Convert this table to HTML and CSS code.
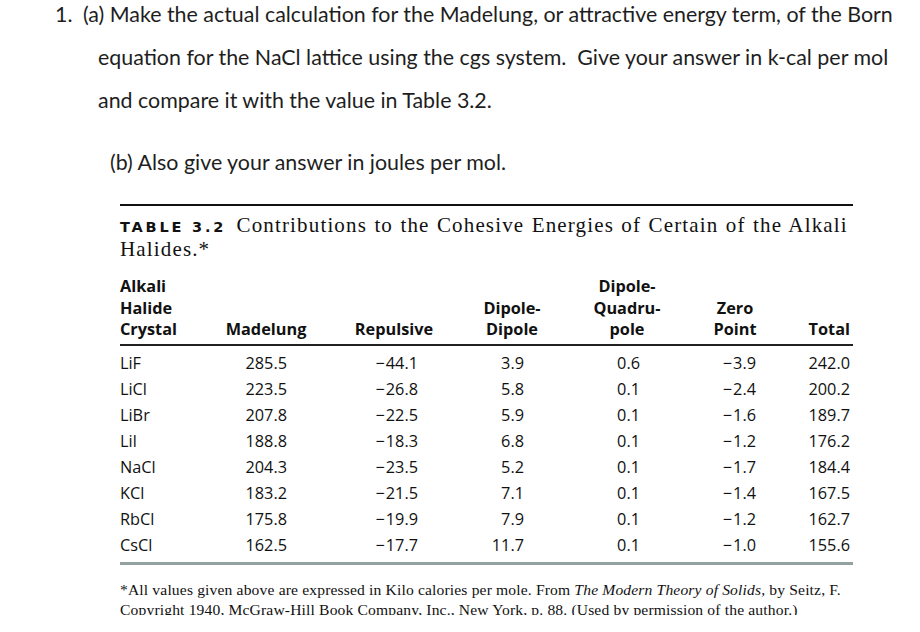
FILE: index.html
```html
<!DOCTYPE html>
<html>
<head>
<meta charset="utf-8">
<link rel="stylesheet" href="styles.css">
</head>
<body>
<div class="page">
  <div class="question">
    <div class="num">1.</div>
    <div class="qbody">(a) Make the actual calculation for the Madelung, or attractive energy term, of the Born<br>equation for the NaCl lattice using the cgs system.&nbsp; Give your answer in k-cal per mol<br>and compare it with the value in Table 3.2.</div>
  </div>
  <div class="part-b">(b) Also give your answer in joules per mol.</div>

  <div class="tbl">
    <div class="caption"><span class="tlabel">TABLE 3.2</span>&nbsp;Contributions to the Cohesive Energies of Certain of the Alkali<br>Halides.*</div>
    <table>
      <colgroup>
        <col class="c1"><col class="c2"><col class="c3"><col class="c4"><col class="c5"><col class="c6"><col class="c7">
      </colgroup>
      <thead>
        <tr>
          <th class="left">Alkali<br>Halide<br>Crystal</th>
          <th>Madelung</th>
          <th>Repulsive</th>
          <th>Dipole-<br>Dipole</th>
          <th>Dipole-<br>Quadru-<br>pole</th>
          <th>Zero<br>Point</th>
          <th class="right">Total</th>
        </tr>
      </thead>
      <tbody>
        <tr class="first"><td class="left">LiF</td><td class="v2">285.5</td><td class="v3"><span class="m">−</span>44.1</td><td class="v4">3.9</td><td class="v5">0.6</td><td class="v6"><span class="m">−</span>3.9</td><td class="v7">242.0</td></tr>
        <tr><td class="left">LiCl</td><td class="v2">223.5</td><td class="v3"><span class="m">−</span>26.8</td><td class="v4">5.8</td><td class="v5">0.1</td><td class="v6"><span class="m">−</span>2.4</td><td class="v7">200.2</td></tr>
        <tr><td class="left">LiBr</td><td class="v2">207.8</td><td class="v3"><span class="m">−</span>22.5</td><td class="v4">5.9</td><td class="v5">0.1</td><td class="v6"><span class="m">−</span>1.6</td><td class="v7">189.7</td></tr>
        <tr><td class="left">LiI</td><td class="v2">188.8</td><td class="v3"><span class="m">−</span>18.3</td><td class="v4">6.8</td><td class="v5">0.1</td><td class="v6"><span class="m">−</span>1.2</td><td class="v7">176.2</td></tr>
        <tr><td class="left">NaCl</td><td class="v2">204.3</td><td class="v3"><span class="m">−</span>23.5</td><td class="v4">5.2</td><td class="v5">0.1</td><td class="v6"><span class="m">−</span>1.7</td><td class="v7">184.4</td></tr>
        <tr><td class="left">KCl</td><td class="v2">183.2</td><td class="v3"><span class="m">−</span>21.5</td><td class="v4">7.1</td><td class="v5">0.1</td><td class="v6"><span class="m">−</span>1.4</td><td class="v7">167.5</td></tr>
        <tr><td class="left">RbCl</td><td class="v2">175.8</td><td class="v3"><span class="m">−</span>19.9</td><td class="v4">7.9</td><td class="v5">0.1</td><td class="v6"><span class="m">−</span>1.2</td><td class="v7">162.7</td></tr>
        <tr class="last"><td class="left">CsCl</td><td class="v2">162.5</td><td class="v3"><span class="m">−</span>17.7</td><td class="v4">11.7</td><td class="v5">0.1</td><td class="v6"><span class="m">−</span>1.0</td><td class="v7">155.6</td></tr>
      </tbody>
    </table>
    <div class="footnote">*All values given above are expressed in Kilo calories per mole. From <i>The Modern Theory of Solids,</i> by Seitz, F.<br>Copyright 1940, McGraw-Hill Book Company, Inc., New York, p. 88. (Used by permission of the author.)</div>
  </div>
</div>
</body>
</html>
```

FILE: styles.css
```css
html, body {
  margin: 0;
  padding: 0;
  background: #ffffff;
}

.page {
  width: 920px;
  height: 632px;
  overflow: hidden;
}

.question {
  display: flex;
  margin-top: -7px;
  padding-left: 55px;
  font-family: Lato, "Open Sans", sans-serif;
  font-size: 21.4px;
  line-height: 43px;
  color: #1e1e1e;
}

.num {
  width: 28px;
  flex: none;
}

.qbody {
  padding-left: 15px;
  text-indent: -15px;
  white-space: nowrap;
}

.part-b {
  margin-top: 19px;
  padding-left: 110px;
  font-family: Lato, "Open Sans", sans-serif;
  font-size: 21.4px;
  line-height: 43px;
  color: #1e1e1e;
}

.tbl {
  margin-top: 20px;
  margin-left: 120px;
  width: 733px;
  border-top: 2px solid #111111;
  color: #111111;
}

.caption {
  padding-top: 8px;
  font-family: "Liberation Serif", "DejaVu Serif", serif;
  font-size: 21px;
  line-height: 22px;
  letter-spacing: 1.15px;
  word-spacing: 1px;
  white-space: nowrap;
}

.tlabel {
  font-family: "DejaVu Sans", sans-serif;
  font-weight: bold;
  font-size: 14.5px;
  letter-spacing: 2.8px;
  word-spacing: 0;
  margin-right: 3px;
}

table {
  margin-top: 16px;
  width: 733px;
  border-collapse: collapse;
  table-layout: fixed;
  font-family: "Open Sans", "Noto Sans", sans-serif;
  font-size: 16.3px;
}

.c1 { width: 90px; }
.c2 { width: 112px; }
.c3 { width: 144px; }
.c4 { width: 92px; }
.c5 { width: 138px; }
.c6 { width: 78px; }
.c7 { width: 79px; }

th {
  font-weight: bold;
  line-height: 21.5px;
  vertical-align: bottom;
  text-align: center;
  padding: 0 0 3px 0;
  border-bottom: 2px solid #222222;
}

th.left { text-align: left; }
th.right { text-align: right; padding-right: 3px; }

td {
  line-height: 26px;
  padding: 0;
  text-align: right;
  white-space: nowrap;
}

.m {
  padding-right: 1px;
}

tr.first td { padding-top: 4px; }
tr.last td { padding-bottom: 4px; border-bottom: 3px solid #93a1a1; }

td.left { text-align: left; }
.v2 { padding-right: 35px; }
.v3 { padding-right: 48px; }
.v4 { padding-right: 34px; }
.v5 { padding-right: 56px; }
.v6 { padding-right: 18px; }
.v7 { padding-right: 3px; }

.footnote {
  margin-top: 15px;
  height: 35px;
  overflow: hidden;
  font-family: "Liberation Serif", "DejaVu Serif", serif;
  font-size: 15.6px;
  line-height: 20px;
  letter-spacing: 0.15px;
  white-space: nowrap;
  color: #111111;
}
```
